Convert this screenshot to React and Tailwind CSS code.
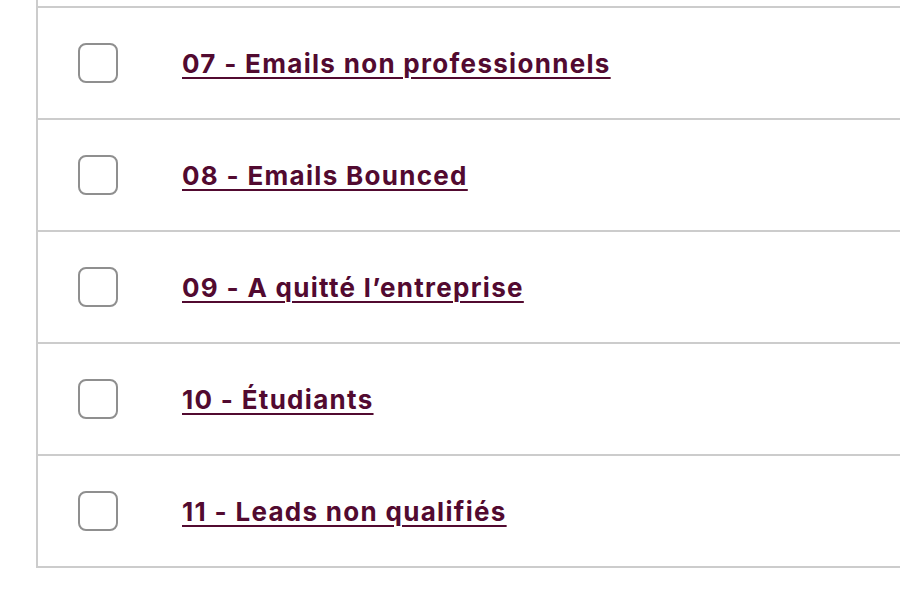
import React from 'react';

const LISTS = [
  '07 - Emails non professionnels',
  '08 - Emails Bounced',
  '09 - A quitté l\u2019entreprise',
  '10 - Étudiants',
  '11 - Leads non qualifiés',
];

export default function App() {
  return (
    <div className="min-h-[596px] bg-white pl-[36px] font-['Inter','Noto_Sans',sans-serif]">
      <div className="border-l-2 border-[#cccccc]">
        {/* tail of the previous row */}
        <div className="h-[8px] border-b-2 border-[#cccccc]" />
        {LISTS.map((label) => (
          <div
            key={label}
            className="flex h-[112px] items-center border-b-2 border-[#cccccc] pl-[40px]"
          >
            <input
              type="checkbox"
              className="h-[40px] w-[40px] shrink-0 appearance-none rounded-[8px] border-2 border-[#8f8f8f] bg-white"
            />
            <a
              href="#"
              className="ml-[64px] text-[26px] font-bold tracking-[0.05em] text-[#520a30] underline decoration-2 underline-offset-[4px]"
            >
              {label}
            </a>
          </div>
        ))}
      </div>
    </div>
  );
}
